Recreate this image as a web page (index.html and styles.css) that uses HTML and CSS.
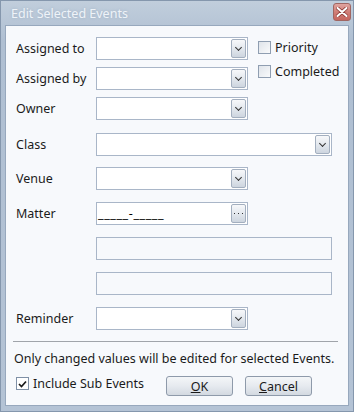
FILE: index.html
```html
<!DOCTYPE html>
<html lang="en">
<head>
    <meta charset="UTF-8">
    <title>Edit Selected Events</title>
    <link rel="stylesheet" href="styles.css">
</head>
<body>
    <div class="window">
        <!-- Title bar -->
        <div class="titlebar">
            <span class="title">Edit Selected Events</span>
            <span class="close">
                <svg width="12" height="10" viewBox="0 0 12 10">
                    <path d="M1.5 1 L10.5 9 M10.5 1 L1.5 9" stroke="#8c3a36" stroke-width="3.6" stroke-linecap="round"/>
                    <path d="M1.5 1 L10.5 9 M10.5 1 L1.5 9" stroke="#fff" stroke-width="2" stroke-linecap="round"/>
                </svg>
            </span>
        </div>

        <div class="client">
            <div class="top-grid">
                <span class="lbl">Assigned to</span>
                <div class="combo"><span class="drop"><i class="chev"></i></span></div>
                <div class="flags">
                    <label class="check"><span class="box"></span>Priority</label>
                    <label class="check"><span class="box"></span>Completed</label>
                </div>
                <span class="lbl">Assigned by</span>
                <div class="combo"><span class="drop"><i class="chev"></i></span></div>
                <span class="lbl">Owner</span>
                <div class="combo"><span class="drop"><i class="chev"></i></span></div>
            </div>

            <div class="row row-class">
                <span class="lbl">Class</span>
                <div class="combo wide"><span class="drop"><i class="chev"></i></span></div>
            </div>
            <div class="row">
                <span class="lbl">Venue</span>
                <div class="combo"><span class="drop"><i class="chev"></i></span></div>
            </div>
            <div class="row">
                <span class="lbl">Matter</span>
                <div class="combo">
                    <span class="mask">_____-_____</span>
                    <span class="drop">
                        <svg width="9" height="3" viewBox="0 0 9 3"><rect x="0" y="1" width="1" height="1" fill="#333"/><rect x="4" y="1" width="1" height="1" fill="#333"/><rect x="8" y="1" width="1" height="1" fill="#333"/></svg>
                    </span>
                </div>
            </div>
            <div class="row">
                <span class="lbl"></span>
                <div class="combo wide"></div>
            </div>
            <div class="row">
                <span class="lbl"></span>
                <div class="combo wide"></div>
            </div>
            <div class="row">
                <span class="lbl">Reminder</span>
                <div class="combo"><span class="drop"><i class="chev"></i></span></div>
            </div>

            <div class="sep"></div>
            <p class="note">Only changed values will be edited for selected Events.</p>

            <div class="footer">
                <label class="check"><span class="box checked">
                    <svg width="9" height="8" viewBox="0 0 9 8"><path d="M1 4 L3.5 6.5 L8 1.5" fill="none" stroke="#1a1a1a" stroke-width="1.7"/></svg>
                </span>Include Sub Events</label>
                <div class="buttons">
                    <button class="btn"><u>O</u>K</button>
                    <button class="btn"><u>C</u>ancel</button>
                </div>
            </div>
        </div>
    </div>
</body>
</html>
```

FILE: styles.css
```css
* {
    margin: 0;
    padding: 0;
    box-sizing: border-box;
}
body {
    width: 354px;
    height: 412px;
    font-family: 'Noto Sans', sans-serif;
    font-size: 12.5px;
    color: #1b1b1b;
    background: #fff;
}

/* Window frame */
.window {
    width: 354px;
    height: 412px;
    border: 1px solid #8597ad;
    background: linear-gradient(#c1cedc, #afbfd2 40px, #b4c3d5);
    display: flex;
    flex-direction: column;
}
.titlebar {
    height: 24px;
    display: flex;
    align-items: center;
    justify-content: space-between;
    padding: 0 2px 0 10px;
}
.title {
    color: #eef3f8;
    font-size: 12.5px;
    text-shadow: 0 0 3px #9fb0c4;
}
.close {
    width: 18px;
    height: 18px;
    margin-top: -2px;
    border: 1px solid #a06662;
    border-radius: 3px;
    background: linear-gradient(#e0a5a0, #d07e77 50%, #c6665f);
    display: flex;
    align-items: center;
    justify-content: center;
}

/* Client area */
.client {
    flex: 1;
    margin: 0 4px 5px 4px;
    border: 1px solid #97a8bd;
    background: #f7f9fc;
    padding: 11px 16px 0 10px;
}
.lbl {
    display: flex;
    align-items: center;
    height: 23px;
    width: 80px;
    flex: none;
}

.top-grid {
    display: grid;
    grid-template-columns: 80px 152px 1fr;
    grid-template-rows: 23px 23px 23px;
    row-gap: 7px;
}
.flags {
    grid-column: 3;
    grid-row: 1 / 3;
    display: flex;
    flex-direction: column;
    gap: 11px;
    padding: 4px 0 0 10px;
}

.row {
    display: flex;
    height: 23px;
    margin-top: 12px;
}
.row-class {
    margin-top: 13px;
}
.row-class + .row {
    margin-top: 11px;
}

/* Combo boxes */
.combo {
    width: 152px;
    height: 23px;
    border: 1px solid #a9b6c8;
    background: #fff;
    display: flex;
    align-items: center;
    justify-content: flex-end;
    padding-right: 1px;
}
.combo.wide {
    width: 236px;
}
.combo.wide:empty {
    background: #f7f9fc;
}
.drop {
    width: 15px;
    height: 19px;
    border: 1px solid #a3afbf;
    border-radius: 2px;
    background: linear-gradient(#f7f8fa, #e3e8ee 50%, #cdd5df);
    display: flex;
    align-items: center;
    justify-content: center;
}
.chev {
    width: 5px;
    height: 5px;
    border-right: 1px solid #333;
    border-bottom: 1px solid #333;
    transform: rotate(45deg);
    margin-top: -3px;
}
.mask {
    flex: 1;
    padding-left: 1px;
    font-size: 12.5px;
    letter-spacing: 0.6px;
    color: #000;
}

/* Check boxes */
.check {
    display: flex;
    align-items: center;
    gap: 4px;
    height: 13px;
}
.box {
    width: 13px;
    height: 13px;
    border: 1px solid #8f9eb1;
    background: linear-gradient(135deg, #dfe4ea, #f9fafb);
    display: flex;
    align-items: center;
    justify-content: center;
}
.box.checked {
    background: #fff;
    border-color: #7f90a6;
}

/* Bottom part */
.sep {
    height: 1px;
    background: #a0a4aa;
    margin: 11px -6px 0 -3px;
}
.note {
    margin: 9px 0 0 -2px;
    line-height: 15px;
    white-space: nowrap;
}
.footer {
    display: flex;
    align-items: flex-start;
    margin-top: 10px;
}
.footer .check {
    margin-top: 1px;
}
.buttons {
    display: flex;
    gap: 12px;
    margin-left: auto;
    margin-right: 20px;
}
.btn {
    width: 67px;
    height: 20px;
    font-family: inherit;
    font-size: 12.5px;
    color: #1b1b1b;
    border: 1px solid #8e9aaa;
    border-radius: 3px;
    background: linear-gradient(#f4f6f8, #e6eaef 50%, #d3d9e1);
}
```
